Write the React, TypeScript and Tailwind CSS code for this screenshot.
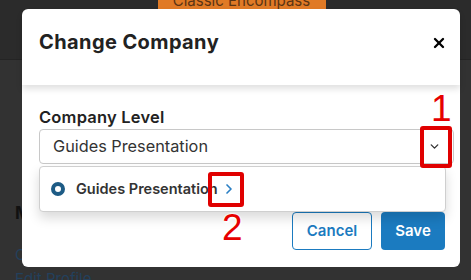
import { ChevronDown, ChevronRight, X } from "lucide-react";

const font = { fontFamily: "Inter, 'Open Sans', sans-serif" };

const Annotation = ({ label }: { label: string }) => (
  <span
    className="text-[37px] leading-none text-[#e60000] font-normal"
    style={{
      fontFamily: "'Liberation Sans', Arial, sans-serif",
      textShadow: "0 0 2px #fff, 0 0 2px #fff, 0 0 2px #fff, 1px 2px 2px #fff",
    }}
  >
    {label}
  </span>
);

const Background = () => (
  <div className="absolute inset-0 bg-[#323232]">
    <div className="h-[60px] bg-[#2b2b2b] border-b border-[#242424] flex justify-center">
      <div className="w-[168px] h-[9px] bg-[#e07a26] ml-[12px] flex items-end justify-center overflow-hidden">
        <span className="text-[15px] leading-[16px] text-[#5a3414]">Classic Encompass</span>
      </div>
    </div>
    <div className="pl-[15px] pt-[143px] flex flex-col">
      <span className="text-[17px] font-bold text-[#111] leading-[20px]">My Profile</span>
      <span className="text-[15px] text-[#23405c] leading-[20px] mt-[22px]">Change</span>
      <span className="text-[15px] text-[#23405c] leading-[20px] mt-[4px]">Edit Profile</span>
    </div>
  </div>
);

export default function App() {
  return (
    <div className="relative w-[471px] h-[280px] overflow-hidden" style={font}>
      <Background />

      <div className="absolute left-[22px] top-[9px] w-[438px] h-[258px] bg-white rounded-[6px] flex flex-col">
        <div className="h-[76px] shrink-0 flex items-start justify-between pl-[17px] pr-[13px] pt-[18px] shadow-[0_4px_6px_rgba(0,0,0,0.12)] relative z-10 rounded-t-[6px]">
          <h2 className="text-[20px] font-bold text-[#222] tracking-[0.4px]">Change Company</h2>
          <X className="w-[16px] h-[16px] mt-[8px] text-black" strokeWidth={3.5} />
        </div>

        <div className="px-[17px] pt-[22px] relative">
          <div className="text-[16.5px] font-semibold text-[#222] leading-[20px] tracking-[0.2px]">Company Level</div>
          <div className="mt-[2px] h-[35px] w-[415px] border border-[#c8c8c8] rounded-[4px] flex items-center justify-between pl-[13px] pr-[12px]">
            <span className="text-[16.3px] text-[#333]">Guides Presentation</span>
            <ChevronDown className="w-[13px] h-[13px] text-[#333]" strokeWidth={2.5} />
          </div>

          <div className="absolute left-[17px] top-[81px] w-[407px] h-[46px] bg-white border border-[#cfcfcf] rounded-[4px] shadow-[0_6px_12px_rgba(0,0,0,0.15)] z-20 flex items-center pl-[11px]">
            <span className="w-[14px] h-[14px] rounded-full border-[4.5px] border-[#1d5b85] bg-white" />
            <span className="ml-[11px] text-[14.5px] font-semibold text-[#333]">Guides Presentation</span>
            <ChevronRight className="w-[16px] h-[16px] text-[#2a7fc4] ml-[3px]" strokeWidth={2.5} />
          </div>
        </div>

        <div className="mt-auto flex justify-end gap-[9px] pr-[15px] pb-[17px]">
          <button className="w-[80px] h-[38px] border border-[#1b7bc0] rounded-[4px] text-[15px] font-semibold text-[#1b7bc0]">
            Cancel
          </button>
          <button className="w-[64px] h-[38px] bg-[#1b7bc0] rounded-[4px] text-[15px] font-semibold text-white">
            Save
          </button>
        </div>
      </div>

      <div className="absolute left-[420px] top-[126px] w-[32px] h-[42px] border-[4px] border-[#e00000] rounded-[3px] z-30" />
      <div className="absolute left-[431px] top-[90px] z-30">
        <Annotation label="1" />
      </div>
      <div className="absolute left-[208px] top-[172px] w-[36px] h-[35px] border-[4px] border-[#e00000] rounded-[3px] z-30" />
      <div className="absolute left-[222px] top-[209px] z-30">
        <Annotation label="2" />
      </div>
    </div>
  );
}
